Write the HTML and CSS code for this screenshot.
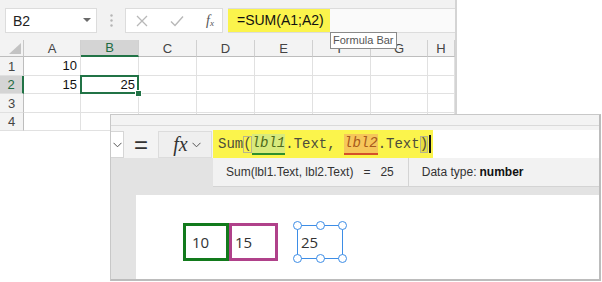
FILE: index.html
```html
<!DOCTYPE html>
<html>
<head>
  <meta charset="utf-8">
  <title>Formula bar</title>
  <link rel="stylesheet" href="styles.css">
</head>
<body>
  <div class="excel">
    <div class="xl-bar">
      <div class="namebox">
        <span>B2</span>
        <svg class="dd" width="8" height="5" viewBox="0 0 8 5"><path d="M0 0h8L4 4z" fill="#6a6a6a"/></svg>
      </div>
      <div class="grip">
        <svg width="3" height="13" viewBox="0 0 3 13"><circle cx="1.5" cy="1.5" r="1.2" fill="#b5b5b5"/><circle cx="1.5" cy="6.5" r="1.2" fill="#b5b5b5"/><circle cx="1.5" cy="11.5" r="1.2" fill="#b5b5b5"/></svg>
      </div>
      <div class="fbtns">
        <svg width="12" height="12" viewBox="0 0 12 12"><path d="M1 1l10 10M11 1L1 11" stroke="#b8b8b8" stroke-width="1.3"/></svg>
        <svg width="14" height="12" viewBox="0 0 14 12"><path d="M1 6.5l4 4L13 1.5" stroke="#b8b8b8" stroke-width="1.4" fill="none"/></svg>
        <span class="xl-fx">f<sub>x</sub></span>
      </div>
      <div class="xl-formula"><span class="xl-hl">=SUM(A1;A2)</span></div>
    </div>

    <div class="grid">
      <div class="hd corner"><svg width="12" height="11" viewBox="0 0 12 11"><path d="M12 0v11H0z" fill="#c3c3c3"/></svg></div>
      <div class="hd col">A</div>
      <div class="hd col sel-col">B</div>
      <div class="hd col">C</div>
      <div class="hd col">D</div>
      <div class="hd col">E</div>
      <div class="hd col">F</div>
      <div class="hd col">G</div>
      <div class="hd col">H</div>

      <div class="hd row">1</div>
      <div class="cell">10</div><div class="cell"></div><div class="cell"></div><div class="cell"></div><div class="cell"></div><div class="cell"></div><div class="cell"></div><div class="cell"></div>

      <div class="hd row sel-row">2</div>
      <div class="cell">15</div><div class="cell active">25<span class="handle"></span></div><div class="cell"></div><div class="cell"></div><div class="cell"></div><div class="cell"></div><div class="cell"></div><div class="cell"></div>

      <div class="hd row">3</div>
      <div class="cell"></div><div class="cell"></div><div class="cell"></div><div class="cell"></div><div class="cell"></div><div class="cell"></div><div class="cell"></div><div class="cell"></div>

      <div class="hd row">4</div>
      <div class="cell"></div><div class="cell"></div><div class="cell"></div><div class="cell"></div><div class="cell"></div><div class="cell"></div><div class="cell"></div><div class="cell"></div>
    </div>

    <div class="tip">Formula Bar</div>
  </div>

  <div class="pa">
    <div class="pa-top"></div>
    <div class="pa-formula">
      <div class="ctl-dd">
        <svg width="9" height="6" viewBox="0 0 9 6"><path d="M0.5 0.8l4 4 4-4" stroke="#555" fill="none"/></svg>
      </div>
      <div class="eq">=</div>
      <div class="fxbtn">
        <span class="pa-fx">fx</span>
        <svg width="9" height="6" viewBox="0 0 9 6"><path d="M0.5 0.8l4 4 4-4" stroke="#555" fill="none"/></svg>
      </div>
      <div class="pa-input">
        <span class="code">Sum<span class="brk">(</span><span class="ref1">lbl1</span>.Text, <span class="ref2">lbl2</span>.Text<span class="brk end">)</span><span class="caret"></span></span>
      </div>
    </div>
    <div class="pa-result">
      <div class="res-expr">Sum(lbl1.Text, lbl2.Text)<span class="res-eq">=</span>25</div>
      <div class="res-type">Data type: <b>number</b></div>
    </div>
    <div class="pa-body">
      <div class="canvas">
        <div class="lbl green">10</div>
        <div class="lbl pink">15</div>
        <div class="lbl sel">25
          <span class="h tl"></span><span class="h tm"></span><span class="h tr"></span>
          <span class="h bl"></span><span class="h bm"></span><span class="h br"></span>
        </div>
      </div>
    </div>
  </div>
</body>
</html>
```

FILE: styles.css
```css
body {
  margin: 0;
  background-color: #fff;
  font-family: "Liberation Sans", Arial, sans-serif;
  width: 602px;
  height: 282px;
  position: relative;
  overflow: hidden;
}

/* excel window */
.excel {
  position: relative;
  width: 457px;
  height: 131px;
  background-color: #f2f2f2;
  border-right: 2px solid #d4d4d4;
  box-sizing: border-box;
}

.xl-bar {
  height: 40px;
  box-sizing: border-box;
  padding: 8px 0 0 5px;
  display: flex;
  align-items: flex-start;
}

.namebox {
  width: 92px;
  height: 25px;
  box-sizing: border-box;
  background-color: #fff;
  border: 1px solid #dcdcdc;
  display: flex;
  align-items: center;
  justify-content: space-between;
  padding: 0 5px 0 7px;
  font-size: 14px;
  color: #222;
}

.grip {
  width: 28px;
  height: 25px;
  display: flex;
  align-items: center;
  justify-content: center;
}

.fbtns {
  width: 98px;
  height: 25px;
  box-sizing: border-box;
  background-color: #fff;
  border: 1px solid #dcdcdc;
  display: flex;
  align-items: center;
  justify-content: space-between;
  padding: 0 8px 0 10px;
}

.xl-fx {
  font-family: "Liberation Serif", serif;
  font-style: italic;
  font-size: 14px;
  color: #555;
}

.xl-fx sub {
  font-size: 9px;
  vertical-align: -1px;
}

.xl-formula {
  flex: 1;
  margin-left: 5px;
  height: 25px;
  box-sizing: border-box;
  background-color: #fafafa;
  border-top: 1px solid #dcdcdc;
  border-bottom: 1px solid #dcdcdc;
}

.xl-hl {
  display: inline-block;
  height: 23px;
  line-height: 23px;
  width: 102px;
  box-sizing: border-box;
  padding-left: 9px;
  background-color: #fbf44c;
  font-size: 14px;
  color: #111;
}

.grid {
  display: grid;
  grid-template-columns: 24px 57px 58px 58px 58px 58px 58px 57px 27px;
  grid-template-rows: 17px 19px 18px 19px 18px;
  background-color: #fff;
}

.hd {
  background-color: #f3f3f3;
  color: #444;
  font-size: 13px;
  display: flex;
  align-items: center;
  justify-content: center;
  box-sizing: border-box;
}

.corner {
  border-right: 1px solid #c8c8c8;
  border-bottom: 1px solid #bdbdbd;
  justify-content: flex-end;
  align-items: flex-end;
  padding: 0 2px 2px 0;
}

.col {
  border-right: 1px solid #d0d0d0;
  border-bottom: 1px solid #bdbdbd;
}

.row {
  border-right: 1px solid #bdbdbd;
  border-bottom: 1px solid #e0e0e0;
}

.sel-col {
  background-color: #d4d4d4;
  color: #1e6b41;
  border-bottom: 2px solid #217346;
}

.sel-row {
  background-color: #d4d4d4;
  color: #1e6b41;
  border-right: 2px solid #217346;
}

.cell {
  border-right: 1px solid #e1e1e1;
  border-bottom: 1px solid #e1e1e1;
  box-sizing: border-box;
  font-size: 13px;
  color: #111;
  text-align: right;
  padding-right: 3px;
  line-height: 18px;
}

.cell.active {
  position: relative;
  box-shadow: inset 0 0 0 2px #217346;
  border: none;
  margin: -1px 0 0 -1px;
  padding-right: 4px;
  line-height: 20px;
}

.handle {
  position: absolute;
  right: -3px;
  bottom: -3px;
  width: 5px;
  height: 5px;
  background-color: #217346;
  border: 1px solid #fff;
}

.tip {
  position: absolute;
  left: 330px;
  top: 32px;
  z-index: 2;
  background-color: #fff;
  border: 1px solid #8a8a8a;
  padding: 0 2px;
  height: 15px;
  line-height: 15px;
  font-size: 11px;
  color: #555;
}

/* power apps window */
.pa {
  position: absolute;
  left: 110px;
  top: 114px;
  width: 491px;
  height: 167px;
  box-sizing: border-box;
  z-index: 3;
  background-color: #e3e3e3;
  border: 1px solid #c8c8c8;
  border-right: 2px solid #bcbcbc;
  border-bottom: 2px solid #bcbcbc;
  display: flex;
  flex-direction: column;
}

.pa-top {
  height: 10px;
  background-color: #f3f3f3;
  border-bottom: 1px solid #dadada;
}

.pa-formula {
  height: 32px;
  box-sizing: border-box;
  padding-top: 5px;
  background-color: #f3f3f3;
  display: flex;
  align-items: flex-start;
}

.ctl-dd {
  width: 13px;
  height: 27px;
  box-sizing: border-box;
  background-color: #fff;
  border: 1px solid #d6d6d6;
  border-left: none;
  display: flex;
  align-items: center;
  justify-content: center;
}

.eq {
  width: 34px;
  height: 27px;
  text-align: center;
  line-height: 28px;
  font-size: 24px;
  color: #333;
}

.fxbtn {
  width: 54px;
  height: 27px;
  box-sizing: border-box;
  background-color: #efefef;
  border: 1px solid #dcdcdc;
  display: flex;
  align-items: center;
  justify-content: center;
  gap: 4px;
  padding-left: 4px;
}

.pa-fx {
  font-family: "Liberation Serif", serif;
  font-style: italic;
  font-size: 20px;
  color: #333;
}

.pa-input {
  flex: 1;
  margin: -1px 0 0 1px;
  height: 28px;
  background-color: #fff;
  display: flex;
}

.code {
  display: flex;
  align-items: center;
  height: 28px;
  padding: 0 2px 0 5px;
  background-color: #fbf44c;
  font-family: "Liberation Mono", monospace;
  font-size: 14px;
  color: #4e4e3c;
  white-space: pre;
}

.brk {
  outline: 1px solid #b9b58a;
  outline-offset: -1px;
  line-height: 17px;
}

.brk.end {
  background-color: #e6df40;
}

.ref1, .ref2 {
  font-style: italic;
  line-height: 19px;
  border-bottom: 2px solid;
}

.ref1 {
  background-color: #d8ea7c;
  border-color: #2d8f2d;
  color: #4f6a1a;
}

.ref2 {
  background-color: #f6c65a;
  border-color: #d4502a;
  color: #a85a1c;
}

.caret {
  display: inline-block;
  width: 2px;
  height: 18px;
  margin-left: 1px;
  background-color: #111;
}

.pa-result {
  height: 29px;
  margin-left: 102px;
  box-sizing: border-box;
  background-color: #f2f2f2;
  border-bottom: 1px solid #d4d4d4;
  display: flex;
  align-items: stretch;
  font-size: 12px;
  color: #333;
}

.res-expr {
  display: flex;
  align-items: center;
  padding: 0 14px 0 13px;
}

.res-eq {
  margin: 0 10px;
}

.res-type {
  display: flex;
  align-items: center;
  padding-left: 13px;
  border-left: 1px solid #d4d4d4;
}

.res-type b {
  margin-left: 3px;
  color: #111;
}

.pa-body {
  flex: 1;
  padding: 8px 0 0 25px;
  display: flex;
}

.canvas {
  flex: 1;
  background-color: #fff;
  display: flex;
  align-items: flex-start;
  padding: 28px 0 0 47px;
}

.lbl {
  height: 38px;
  box-sizing: border-box;
  font-family: "Open Sans", sans-serif;
  font-size: 15px;
  color: #333;
  display: flex;
  align-items: center;
}

.lbl.green {
  width: 46px;
  border: 3px solid #127a1c;
  padding-left: 6px;
  position: relative;
  z-index: 1;
}

.lbl.pink {
  width: 49px;
  border: 3px solid #b0418a;
  padding-left: 3px;
}

.lbl.sel {
  width: 46px;
  height: 34px;
  margin: 2px 0 0 19px;
  border: 1px solid #3d8de6;
  padding-left: 3px;
  position: relative;
}

.h {
  position: absolute;
  width: 9px;
  height: 9px;
  box-sizing: border-box;
  border: 1.5px solid #3d8de6;
  border-radius: 50%;
  background-color: #fff;
}

.tl, .tm, .tr { top: -5px; }
.bl, .bm, .br { bottom: -5px; }
.tl, .bl { left: -5px; }
.tm, .bm { left: 17.5px; }
.tr, .br { right: -5px; }
```
